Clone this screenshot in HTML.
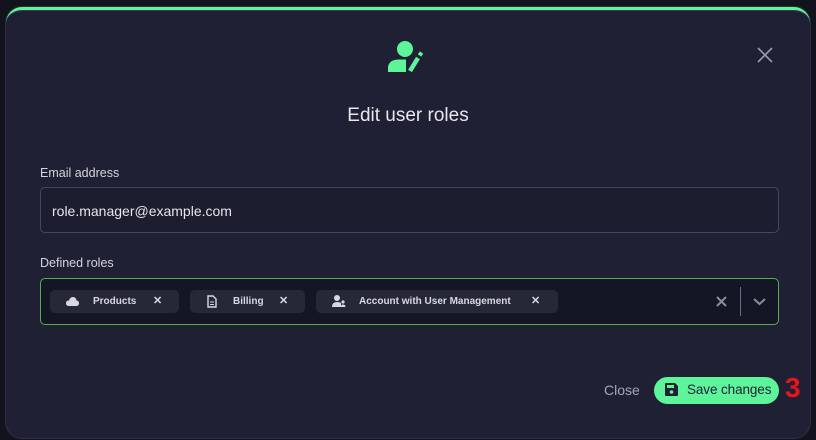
<!DOCTYPE html>
<html><head><style>
*{box-sizing:border-box;margin:0;padding:0}
body{width:816px;height:440px;background:#12131d;font-family:"Liberation Sans",sans-serif;position:relative;overflow:hidden}
.modal{position:absolute;left:6px;top:7px;width:804px;height:431px;border-radius:16px;background:#1f2034;border-top:3px solid #5ef59a;box-shadow:inset 0 1px 0 #3a3c52, 0 0 0 1px #2d2f44}
.t{position:absolute;color:#e6e6ee}
.inp{position:absolute;left:40px;width:739px;border-radius:5px}
.chip{position:absolute;top:290px;height:23px;background:#262838;border-radius:5px;color:#d8d8e2;font-size:10px;font-weight:bold;line-height:23px}
.chip .x{position:absolute;font-size:11px}
</style></head><body>
<div class="modal"></div>
<svg style="position:absolute;left:385px;top:38px" width="42" height="36" viewBox="385 38 42 36">
<circle cx="405" cy="49" r="8" fill="#5ef59a"/>
<path d="M388 72 L388 67 Q389 60 398 59.5 L406 59.5 L406 72 Z" fill="#5ef59a"/>
<path d="M410 71 L418 58" stroke="#5ef59a" stroke-width="4.5"/>
<path d="M419.5 55.5 L421.5 52.5" stroke="#5ef59a" stroke-width="4"/>
</svg>
<svg style="position:absolute;left:757px;top:47px" width="16" height="16"><path d="M1 1L15 15M15 1L1 15" stroke="#9a9bab" stroke-width="1.6"/></svg>
<div class="t" style="left:0;width:816px;text-align:center;top:105px;font-size:19px">Edit user roles</div>
<div class="t" style="left:40px;top:166px;font-size:12.5px;color:#d4d4de">Email address</div>
<div class="inp" style="top:187px;height:46px;background:#1c1d2e;border:1px solid #45475c"></div>
<div class="t" style="left:52px;top:203px;font-size:14px">role.manager@example.com</div>
<div class="t" style="left:40px;top:256px;font-size:12.5px;color:#d4d4de">Defined roles</div>
<div class="inp" style="top:278px;height:47px;background:#141626;border:1px solid #55b04a"></div>
<div class="chip" style="left:50px;width:129px"><svg style="position:absolute;left:16px;top:7px" width="13" height="9"><path d="M3 9Q0 9 0 6Q0 3.5 3 3.5Q4 0 7 0Q10 0 10.5 3.5Q13 3.5 13 6.5Q13 9 10 9Z" fill="#d8d8e2"/></svg><span style="position:absolute;left:43px">Products</span><span class="x" style="left:103px">✕</span></div>
<div class="chip" style="left:190px;width:115px"><svg style="position:absolute;left:17px;top:5px" width="10" height="13"><path d="M1 1H6L9 4V12H1Z" fill="none" stroke="#d8d8e2" stroke-width="1.4"/><path d="M3 7H7M3 9.5H7" stroke="#d8d8e2"/></svg><span style="position:absolute;left:43px">Billing</span><span class="x" style="left:89px">✕</span></div>
<div class="chip" style="left:316px;width:242px"><svg style="position:absolute;left:16px;top:5px" width="14" height="12"><circle cx="5" cy="3" r="3" fill="#d8d8e2"/><path d="M0 12Q0 7 5 7Q8 7 9 8V12Z" fill="#d8d8e2"/><circle cx="11" cy="7" r="1.6" fill="#d8d8e2"/><path d="M8.5 12Q9 9.5 11 9.5Q13.5 9.5 13.5 12Z" fill="#d8d8e2"/></svg><span style="position:absolute;left:43px">Account with User Management</span><span class="x" style="left:215px">✕</span></div>
<svg style="position:absolute;left:716px;top:296px" width="11" height="11"><path d="M1 1L10 10M10 1L1 10" stroke="#8c8d9c" stroke-width="2"/></svg>
<div style="position:absolute;left:740px;top:287px;width:1px;height:29px;background:#6b6c80"></div>
<svg style="position:absolute;left:753px;top:298px" width="13" height="8"><path d="M1 1L6.5 6L12 1" fill="none" stroke="#8c8d9c" stroke-width="2"/></svg>
<div class="t" style="left:604px;top:382px;font-size:14px;color:#a5a6b5">Close</div>
<div style="position:absolute;left:654px;top:377px;width:125px;height:27px;border-radius:14px;background:#5ef59a"></div>
<svg style="position:absolute;left:665px;top:383px" width="13" height="13"><path d="M0 1Q0 0 1 0H10L13 3V12Q13 13 12 13H1Q0 13 0 12Z" fill="#1f2034"/><rect x="2" y="2" width="7" height="3" fill="#5ef59a"/><circle cx="6.5" cy="9" r="1.8" fill="#5ef59a"/></svg>
<div class="t" style="left:687px;top:382px;font-size:13.5px;letter-spacing:-0.1px;color:#1f2034">Save changes</div>
<div class="t" style="left:785px;top:372px;font-size:28px;font-weight:bold;color:#e8141b">3</div>
</body></html>
